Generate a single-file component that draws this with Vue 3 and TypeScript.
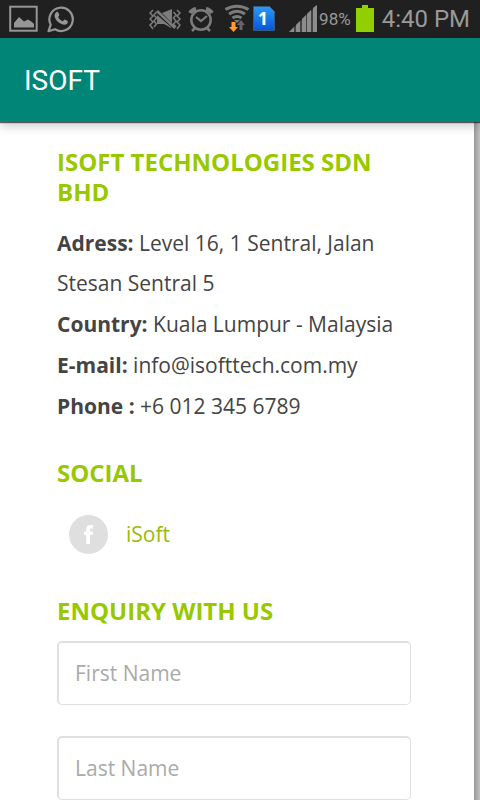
<script setup lang="ts">
import { ref } from 'vue'

interface Detail {
  label: string
  value: string
}

const details: Detail[] = [
  { label: 'Adress:', value: 'Level 16, 1 Sentral, Jalan Stesan Sentral 5' },
  { label: 'Country:', value: 'Kuala Lumpur - Malaysia' },
  { label: 'E-mail:', value: 'info@isofttech.com.my' },
  { label: 'Phone :', value: '+6 012 345 6789' },
]

const firstName = ref('')
const lastName = ref('')
</script>

<template>
  <div class="screen">
    <div class="status">
      <div class="group notices">
        <svg width="30" height="28" viewBox="0 0 30 28" aria-hidden="true">
          <rect x="1.2" y="1.7" width="26.5" height="24" fill="none" stroke="#969696" stroke-width="2" />
          <path d="M5 22.500V18l5-6 5 4.500 4-2 4 2.500 2 2v3.500z" fill="#969696" />
        </svg>
        <svg width="28" height="28" viewBox="0 0 28 28" aria-hidden="true">
          <path d="M1.500 26.200l2.200-6.500A11.700 11.700 0 1 1 8 24.300z" fill="none" stroke="#969696" stroke-width="2.200" stroke-linejoin="round" />
          <path d="M9.200 7.200c.8-.7 1.800-.5 2.100.2l1 2.500c.2.500-.9 1.500-1.100 2 .9 2 2.300 3.400 4.600 4.400.7-.4 1.300-1.900 2-1.700l2.800 1.400c.6.400.2 2.100-.8 2.900-1.400 1.200-3.400 1-5.800-.1-3.200-1.500-5.400-4-6.200-6.500-.6-2.100 0-4 1.400-5.100z" fill="#969696" />
        </svg>
      </div>
      <div class="group system">
        <svg width="132" height="38" viewBox="149 0 132 38" aria-hidden="true">
          <g fill="none" stroke="#7c7c7c" stroke-width="2">
            <path d="M153 10l-3 3 3 3-3 3 3 3-3 3 3 4M156.500 12l-2.500 3 2.500 3-2.500 3 2.500 3-2.500 3M177 10l3 3-3 3 3 3-3 3 3 3-3 4M173.500 12l2.500 3-2.500 3 2.500 3-2.500 3 2.500 3" stroke-width="1.500" />
            <path d="M157 11l18 17" stroke-width="2.500" />
          </g>
          <path d="M157 15l14 12v1l-7-4h-7zM162 13l10-4v14z" fill="#7c7c7c" />
          <g fill="none" stroke="#7c7c7c">
            <circle cx="201" cy="20" r="9.700" stroke-width="2.500" />
            <path d="M196 17l5 4 6-5" stroke-width="2.200" />
            <path d="M190 13a9 9 0 0 1 6-4M206 9a9 9 0 0 1 6 4" stroke-width="4" />
            <path d="M195 28l-3 3M207 28l3 3" stroke-width="2.500" />
          </g>
          <g fill="none" stroke="#7c7c7c" stroke-width="3">
            <path d="M225.500 9.500c7-4.500 16-4.500 23 0M229 14c5-3.500 11-3.500 16 0M232.500 18c3-2 6-2 9 0" />
          </g>
          <path d="M234 20h6l-3 3z" fill="#7c7c7c" />
          <path d="M231.500 22h4v5h2.500l-4.500 5-4.500-5h2.500z" fill="#ff9d2e" />
          <path d="M239.500 30v-5h-2.500l4-5 4 5h-2.500v5z" fill="#666" />
          <defs>
            <linearGradient id="sim-blue" x1="0" y1="0" x2="0" y2="1">
              <stop offset="0" stop-color="#2b9af3" />
              <stop offset="1" stop-color="#0954d8" />
            </linearGradient>
          </defs>
          <path d="M253.500 6.500h16l5 5v19h-21z" fill="url(#sim-blue)" stroke="#345b85" />
          <text class="sim" x="263" y="25" text-anchor="middle">1</text>
        </svg>
        <svg class="signal" width="30" height="28" viewBox="0 0 30 28" aria-hidden="true">
          <path d="M0 27l5-5v5zM7 20l4-4v11H7zM13 14l4-4v17h-4zM18 9l4-4v22h-4zM24 3l4-3v27h-4z" fill="#999" />
          <path d="M0 27L28 0v27z" fill="#777" fill-opacity=".4" />
        </svg>
        <span class="percent">98%</span>
        <svg class="battery" width="18" height="28" viewBox="0 0 18 28" aria-hidden="true">
          <path d="M6 0h6v3h6v24H0V3h6z" fill="#91cf00" />
        </svg>
        <span class="clock">4:40 PM</span>
      </div>
    </div>

    <header class="appbar">
      <h1>ISOFT</h1>
    </header>

    <div class="page">
      <main class="content">
        <section>
          <h2>ISOFT TECHNOLOGIES SDN BHD</h2>
          <div class="details">
            <p v-for="item in details" :key="item.label">
              <strong>{{ item.label }}</strong> {{ item.value }}
            </p>
          </div>
        </section>

        <section class="social">
          <h2>SOCIAL</h2>
          <a href="#">
            <svg width="40" height="40" viewBox="0 0 40 40" aria-hidden="true">
              <circle cx="19.500" cy="19.500" r="19.500" fill="#dfdfdf" />
              <path d="M17.200 29v-9h-2.200v-3.600h2.200v-2c0-3 1.500-4.400 4.200-4.400h2.600v3.500h-1.700c-1 0-1.300.5-1.300 1.300v1.600h3l-.4 3.600H21v9z" fill="#fff" />
            </svg>
            <span>iSoft</span>
          </a>
        </section>

        <section class="enquiry">
          <h2>ENQUIRY WITH US</h2>
          <form @submit.prevent>
            <input v-model="firstName" type="text" name="first-name" placeholder="First Name" aria-label="First Name" />
            <input v-model="lastName" type="text" name="last-name" placeholder="Last Name" aria-label="Last Name" />
          </form>
        </section>
      </main>
      <div class="edge"></div>
    </div>
  </div>
</template>

<style>
body {
  background: #fff;
}
</style>

<style scoped>
.screen {
  min-height: 100vh;
  display: flex;
  flex-direction: column;
  font-family: 'Open Sans', 'Noto Sans', sans-serif;
  color: #444;
}

.status {
  height: 38px;
  padding: 0 10px 0 9px;
  display: flex;
  align-items: center;
  justify-content: space-between;
  background: #202020;
  color: #999;
  font-family: Roboto, sans-serif;
  white-space: nowrap;
}

.group {
  display: flex;
  align-items: center;
}

.notices {
  gap: 8px;
}

.sim {
  fill: #fff;
  font-family: 'Open Sans', sans-serif;
  font-size: 18px;
  font-weight: 700;
}

.signal {
  margin-left: 8px;
}

.percent {
  font-size: 17px;
}

.battery {
  margin: 0 8px 0 5px;
}

.clock {
  font-size: 24px;
}

.appbar {
  position: relative;
  height: 84px;
  padding: 0 24px;
  display: flex;
  align-items: center;
  background: #018577;
  box-shadow: 0 1px 1px #0009, 0 4px 10px #0003;
}

h1 {
  margin: 0;
  color: #fff;
  font-family: Roboto, sans-serif;
  font-size: 28px;
  font-weight: 400;
}

.page {
  flex: 1;
  display: flex;
}

.content {
  flex: 1;
  padding: 25px 63px 0 57px;
}

.edge {
  width: 6px;
  background: linear-gradient(to right, #999, #c2c2c2);
}

h2 {
  margin: 0;
  color: #97c800;
  font-size: 24px;
  font-weight: 700;
  line-height: 30px;
}

.details {
  margin-top: 16px;
  display: flex;
  flex-direction: column;
}

p {
  margin: 0;
  font-size: 21px;
  line-height: 40px;
}

.details p + p {
  padding-top: 1px;
}

.social {
  margin-top: 32px;
}

a {
  margin: 27px 0 0 12px;
  display: flex;
  align-items: center;
  gap: 17px;
  color: #9aba0a;
  font-size: 21px;
  line-height: 36px;
  text-decoration: none;
}

a span {
  padding-bottom: 2px;
}

.enquiry {
  margin-top: 41px;
}

form {
  margin-top: 15px;
  display: flex;
  flex-direction: column;
  gap: 31px;
}

input {
  box-sizing: border-box;
  width: 100%;
  height: 64px;
  padding: 0 16px 1px;
  border: 2px solid #e0e0e0;
  border-bottom-width: 1px;
  border-right-width: 1px;
  border-radius: 5px;
  background: #fff;
  color: #444;
  font-family: inherit;
  font-size: 21px;
}

input::placeholder {
  color: #aaa;
  opacity: 1;
}
</style>
